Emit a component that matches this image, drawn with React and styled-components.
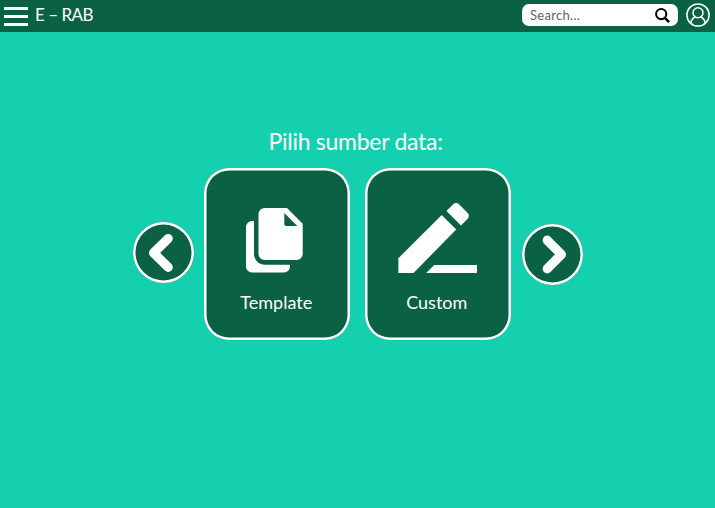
import React from "react";
import styled, { createGlobalStyle } from "styled-components";

const GlobalStyle = createGlobalStyle`
  * { box-sizing: border-box; }
  body { margin: 0; background: #14d0af; }
  button { border: 0; padding: 0; font: inherit; color: inherit; cursor: pointer; }
`;

const Page = styled.div`
  width: 715px;
  height: 508px;
  overflow: hidden;
  background: #14d0af;
  color: #fff;
  font-family: Lato, "Open Sans", sans-serif;
`;

const TopBar = styled.header`
  display: flex;
  align-items: center;
  height: 32px;
  padding: 0 5px 2px 4px;
  background: #0b6144;
`;

const MenuButton = styled.button`
  display: flex;
  flex-direction: column;
  justify-content: space-between;
  width: 24px;
  height: 19px;
  margin-top: 2px;
  background: none;
`;

const MenuLine = styled.span`
  height: 3px;
  background: #fff;
`;

const Brand = styled.h1`
  flex: 1;
  margin: 0 0 0 7px;
  font-size: 17px;
  font-weight: 400;
  line-height: 30px;
  letter-spacing: -0.5px;
  white-space: pre;
`;

const SearchBox = styled.label`
  display: flex;
  align-items: center;
  justify-content: space-between;
  width: 156px;
  height: 22px;
  margin-right: 8.5px;
  padding: 0 7.5px 0 8.5px;
  border-radius: 7px;
  background: #fff;
`;

const SearchInput = styled.input`
  width: 110px;
  padding: 0;
  border: 0;
  outline: 0;
  background: none;
  font: 400 13px Lato, sans-serif;
  letter-spacing: 0.3px;
  &::placeholder { color: #5b6670; opacity: 1; }
`;

const Icon = styled.svg`
  display: block;
  flex: none;
  overflow: visible;
`;

const Main = styled.main`
  padding-top: 94px;
`;

const Title = styled.h2`
  margin: 0 0 12px;
  padding-left: 268.5px;
  font-size: 23px;
  font-weight: 400;
  line-height: 30px;
  letter-spacing: -0.27px;
  white-space: nowrap;
`;

const Picker = styled.section`
  display: flex;
  align-items: flex-start;
  padding-left: 133px;
`;

const ArrowButton = styled.button`
  display: grid;
  place-items: center;
  width: 61px;
  height: 61px;
  margin-top: ${({ $top }) => $top};
  border-radius: 50%;
  background: #0b6144;
  box-shadow: inset 0 0 0 2.5px #fff;
`;

const Cards = styled.div`
  display: flex;
  gap: 14.5px;
  margin: 0 11.5px 0 10px;
`;

const Card = styled.button`
  display: flex;
  flex-direction: column;
  align-items: center;
  width: 146px;
  height: 172px;
  border-radius: 25px;
  background: #0b6144;
  box-shadow: inset 0 0 0 2.5px #fff;
`;

const Artwork = styled.span`
  display: flex;
  align-items: flex-end;
  height: 105px;
  margin-left: ${({ $shift }) => $shift};
`;

const CardLabel = styled.span`
  margin-top: 16px;
  margin-left: -1.5px;
  font-size: 18px;
  line-height: 26px;
  letter-spacing: ${({ $tracking }) => $tracking};
`;

const SearchIcon = () => (
  <Icon width="15" height="15" viewBox="0 0 15 15" fill="none" stroke="#000" strokeWidth="2">
    <circle cx="6.2" cy="6.1" r="5.1" />
    <path d="M9.8 9.8l4.3 4.3" strokeWidth="2.5" />
  </Icon>
);

const UserIcon = () => (
  <Icon width="24" height="24" viewBox="0 0 24 24" fill="none" stroke="#fff" strokeWidth="1.5">
    <circle cx="12" cy="12" r="11.1" />
    <circle cx="12" cy="9.8" r="5" />
    <path d="M4.8 20c.5-2.8 2-5 4.5-6.2M14.7 13.8c2.5 1.2 4 3.4 4.5 6.2" />
  </Icon>
);

const Chevron = ({ points }) => (
  <Icon width="61" height="61" viewBox="0 0 61 61" fill="none" stroke="#fff" strokeWidth="9.2" strokeLinecap="round" strokeLinejoin="round">
    <polyline points={points} />
  </Icon>
);

const FilesIcon = () => (
  <Icon width="57" height="65" viewBox="0 0 57 65" fill="#fff">
    <path fillRule="evenodd" d="M18.5 0H41L56.7 15.7V46a6 6 0 0 1-6 6H18.5a6 6 0 0 1-6-6V6a6 6 0 0 1 6-6ZM38.3 5V16a2 2 0 0 0 2 2H51.3Z" />
    <path d="M8 13V46C8 52 13 56.8 19 56.8H44V58.5a6 6 0 0 1-6 6H6a6 6 0 0 1-6-6V19a6 6 0 0 1 6-6Z" />
  </Icon>
);

const PencilIcon = () => (
  <Icon width="79" height="70" viewBox="0 0 79 70" fill="#fff">
    <path d="M0.4 55.2 43.7 12 58.2 26.5 15.5 70H0.4Z" />
    <path d="M48.5 8 55.2 1.3a4 4 0 0 1 5.8 0L69.7 10a4 4 0 0 1 0 5.7L63 22.6Z" />
    <path d="M28.2 70 36.2 62H79V70Z" />
  </Icon>
);

export default function App() {
  return (
    <Page>
      <GlobalStyle />
      <TopBar>
        <MenuButton aria-label="Menu">
          <MenuLine />
          <MenuLine />
          <MenuLine />
        </MenuButton>
        <Brand>E – RAB</Brand>
        <SearchBox>
          <SearchInput placeholder="Search..." />
          <SearchIcon />
        </SearchBox>
        <UserIcon />
      </TopBar>
      <Main>
        <Title>Pilih sumber data:</Title>
        <Picker>
          <ArrowButton $top="54.4px" aria-label="Previous">
            <Chevron points="35.2,16.5 20.6,30.9 35.2,45.3" />
          </ArrowButton>
          <Cards>
            <Card>
              <Artwork $shift="-5.5px"><FilesIcon /></Artwork>
              <CardLabel $tracking="0">Template</CardLabel>
            </Card>
            <Card>
              <Artwork $shift="0.3px"><PencilIcon /></Artwork>
              <CardLabel $tracking="0">Custom</CardLabel>
            </Card>
          </Cards>
          <ArrowButton $top="56.4px" aria-label="Next">
            <Chevron points="25.2,16.2 39.4,30.4 25.2,44.8" />
          </ArrowButton>
        </Picker>
      </Main>
    </Page>
  );
}
